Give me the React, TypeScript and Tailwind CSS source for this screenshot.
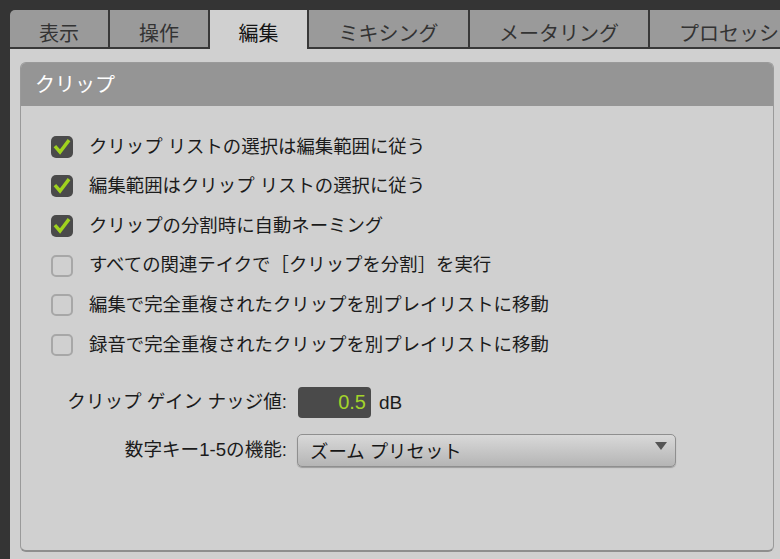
import React from "react";

const FONT = "font-['Liberation_Sans','Noto_Sans_CJK_JP',sans-serif]";

const tabs = [
  { label: "表示", w: "w-[98px]", first: true },
  { label: "操作", w: "w-[100px]" },
  { label: "編集", w: "w-[99px]", active: true },
  { label: "ミキシング", w: "w-[161px]" },
  { label: "メータリング", w: "w-[180px]" },
  { label: "プロセッシング", w: "w-[200px]" },
];

function CheckBox({ checked }: { checked: boolean }) {
  if (checked) {
    return (
      <div className="w-[22px] h-[22px] rounded-[5px] bg-[#4a4a4a] flex items-center justify-center shrink-0">
        <svg width="18" height="18" viewBox="0 0 18 18">
          <path d="M3 9.5 L7 14 L15 3.5" fill="none" stroke="#9fd21e" strokeWidth="3.4" strokeLinecap="square" strokeLinejoin="miter" />
        </svg>
      </div>
    );
  }
  return <div className="w-[22px] h-[22px] rounded-[5px] border-2 border-[#a7a7a7] shrink-0" />;
}

const options = [
  { label: "クリップ リストの選択は編集範囲に従う", checked: true },
  { label: "編集範囲はクリップ リストの選択に従う", checked: true },
  { label: "クリップの分割時に自動ネーミング", checked: true },
  { label: "すべての関連テイクで［クリップを分割］を実行", checked: false },
  { label: "編集で完全重複されたクリップを別プレイリストに移動", checked: false },
  { label: "録音で完全重複されたクリップを別プレイリストに移動", checked: false },
];

export default function App() {
  return (
    <div className={`w-[780px] h-[559px] bg-[#343434] pt-[10px] pl-[10px] flex flex-col overflow-hidden ${FONT}`}>
      <div className="flex h-[39px] shrink-0 overflow-hidden">
        {tabs.map((t, i) => (
          <div
            key={i}
            className={`${t.w} shrink-0 flex items-start justify-center pt-[14px] text-[20px] leading-none ${
              t.active
                ? "bg-[#d0d0d0] text-[#141414]"
                : "bg-[#9a9a9a] text-[#333] border-b-2 border-[#383838]"
            } ${t.first ? "rounded-tl-[5px]" : "border-l-2 border-l-[#383838]"} whitespace-nowrap`}
          >
            <span>{t.label}</span>
          </div>
        ))}
      </div>
      <div className="flex-1 bg-[#d0d0d0] pt-[13px] pl-[10px] pr-[6px] pb-[7px] flex">
        <div className="flex-1 rounded-[6px] border border-[#9a9a9a] border-b-2 border-b-[#8e8e8e] flex flex-col overflow-hidden">
          <div className="h-[43px] bg-[#959595] flex items-center pl-[14px] text-white text-[20px] leading-none shrink-0">
            クリップ
          </div>
          <div className="flex flex-col pt-[21px]">
            {options.map((o, i) => (
              <div key={i} className="h-[39.6px] flex items-center pl-[30px] gap-[16px]">
                <CheckBox checked={o.checked} />
                <span className="text-[18.4px] leading-none text-[#1b1b1b] whitespace-nowrap">{o.label}</span>
              </div>
            ))}
            <div className="flex items-center mt-[22px] h-[31px]">
              <div className="w-[266px] text-right text-[18.6px] leading-none text-[#1b1b1b]">クリップ ゲイン ナッジ値:</div>
              <div className="ml-[11px] w-[73px] h-[31px] rounded-[4px] bg-[#4a4a4a] flex items-center justify-end pr-[5px] text-[20px] leading-none text-[#a3d42a]">
                0.5
              </div>
              <div className="ml-[8px] text-[19px] leading-none text-[#1b1b1b]">dB</div>
            </div>
            <div className="flex items-center mt-[16px] h-[33px]">
              <div className="w-[266px] text-right text-[18.6px] leading-none text-[#1b1b1b]">数字キー1-5の機能:</div>
              <div className="ml-[10px] w-[379px] h-[33px] rounded-[5px] border border-[#8f8f8f] bg-gradient-to-b from-[#d9d9d9] to-[#b5b5b5] shadow-[0_1px_1px_rgba(0,0,0,0.25)] flex items-start justify-between pl-[12px] pr-[7px]">
                <span className="text-[18.4px] leading-none text-[#161616] pt-[8px]">ズーム プリセット</span>
                <svg width="14" height="10" viewBox="0 0 14 10" className="mt-[6px]">
                  <path d="M1 1 L13 1 L7 9 Z" fill="#555" />
                </svg>
              </div>
            </div>
          </div>
        </div>
      </div>
    </div>
  );
}
